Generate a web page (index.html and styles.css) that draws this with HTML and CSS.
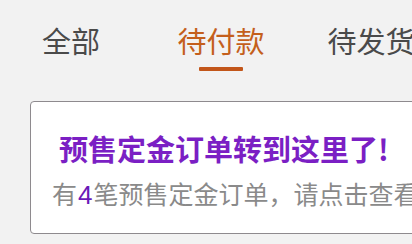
FILE: index.html
```html
<!DOCTYPE html>
<html lang="zh-CN">
<head>
<meta charset="utf-8">
<link rel="stylesheet" href="styles.css">
</head>
<body>
<div class="page">
  <nav class="tabs">
    <div class="tab">全部</div>
    <div class="tab active">待付款</div>
    <div class="tab">待发货</div>
    <div class="tab">待收货</div>
  </nav>
  <section class="card">
    <div class="title">预售定金订单转到这里了!</div>
    <div class="desc">有<span class="num">4</span>笔预售定金订单，请点击查看</div>
  </section>
</div>
</body>
</html>
```
FILE: styles.css
```css
html, body {
  margin: 0;
  padding: 0;
  background: #f2f2f2;
}
body {
  width: 412px;
  height: 244px;
  overflow: hidden;
  font-family: "Noto Sans CJK SC", "Noto Sans", sans-serif;
}
.page {
  padding-top: 19px;
  width: 412px;
  overflow: hidden;
}
.tabs {
  display: grid;
  grid-template-columns: repeat(4, 150px);
  margin-left: -4px;
  white-space: nowrap;
}
.tab {
  text-align: center;
  font-size: 29px;
  line-height: 42px;
  color: #4a4a4a;
  padding-bottom: 10px;
  position: relative;
}
.tab.active {
  color: #c45f1c;
}
.tab.active::after {
  content: "";
  position: absolute;
  left: 50%;
  bottom: 0;
  width: 44px;
  height: 4px;
  margin-left: -22px;
  background: #c2561a;
  border-radius: 1px;
}
.card {
  margin: 30px 0 0 30px;
  width: 420px;
  height: 131px;
  background: #fff;
  border: 1px solid #8e8a8e;
  border-radius: 4px;
  white-space: nowrap;
  overflow: hidden;
}
.title {
  padding: 25px 0 0 28px;
  font-size: 29px;
  line-height: 42px;
  font-weight: 700;
  color: #7b1fc4;
}
.desc {
  padding: 6px 0 0 21px;
  font-size: 25px;
  line-height: 36px;
  color: #8a8a8a;
}
.num {
  color: #6a1ab8;
  font-family: "Liberation Sans", sans-serif;
  font-size: 26px;
  padding: 0 1px;
}
```
